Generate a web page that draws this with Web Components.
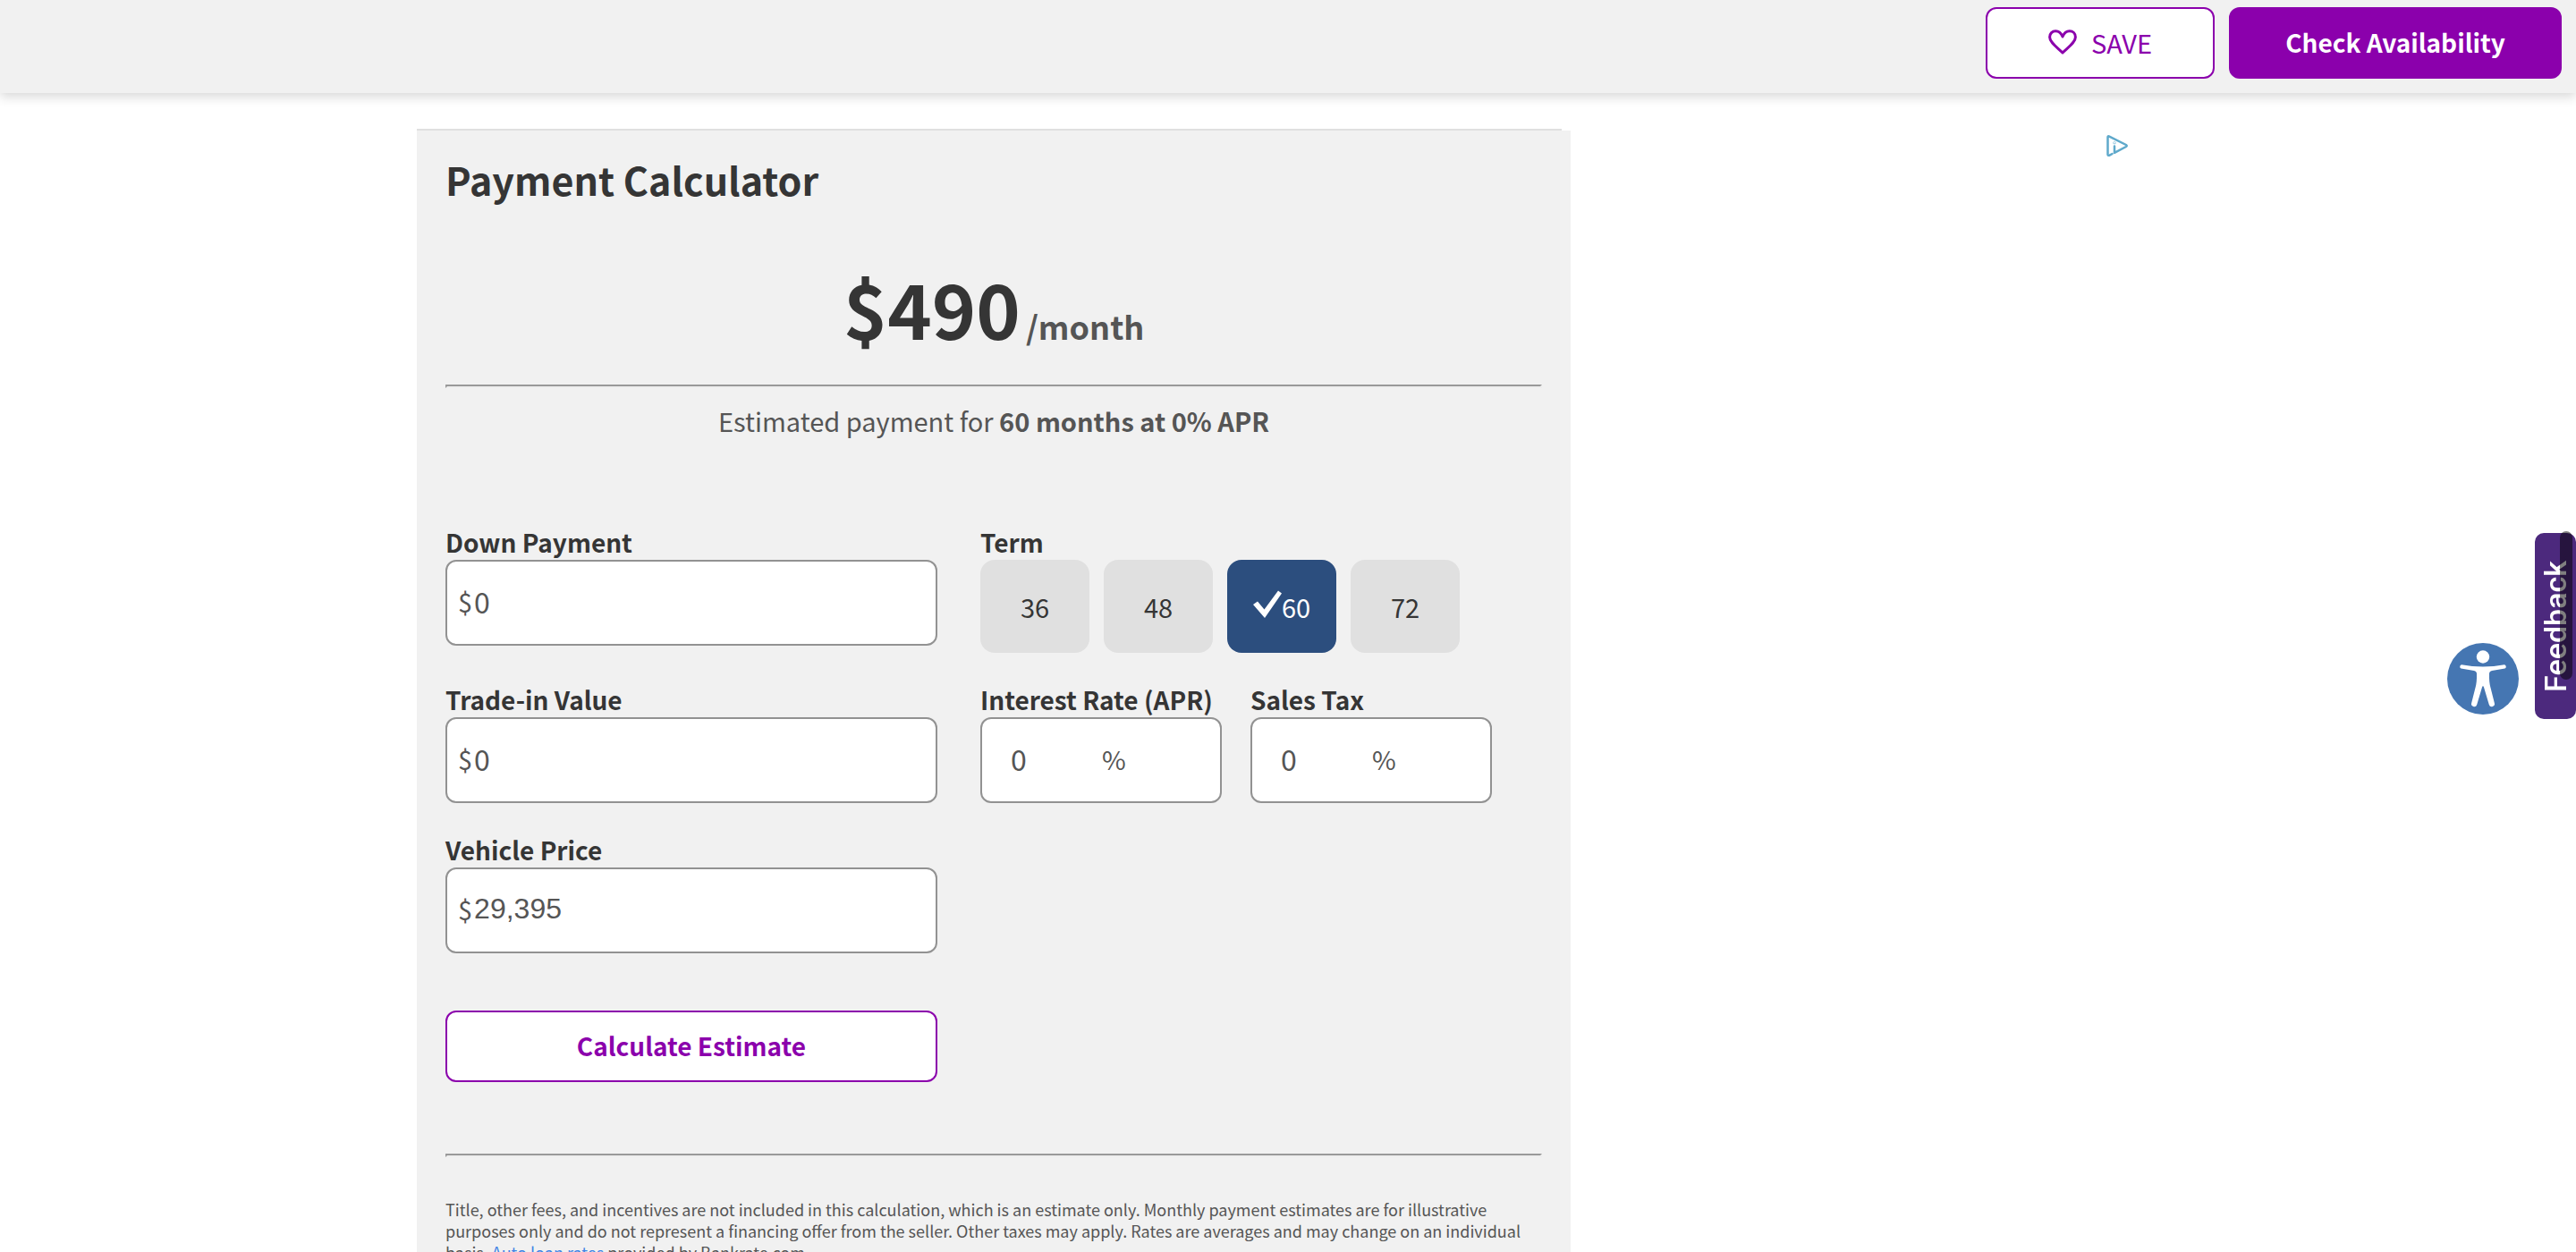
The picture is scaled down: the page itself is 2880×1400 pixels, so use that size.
<!DOCTYPE html>
<html lang="en">
<head>
<meta charset="utf-8">
<title>Payment Calculator</title>
<style>
  html { --sans: "Noto Sans CJK SC", "Noto Sans", sans-serif; --purple: #8b00ac; --ink: #353535; --grey: #555; --panel: #f1f1f1; --line: #999; }
  body { margin: 0; background: #fff; font-family: var(--sans); color: var(--ink); overflow: hidden; height: 100vh; }
</style>
</head>
<body>
<payment-page></payment-page>

<script>
const define = (name, html, setup) => {
  const tpl = document.createElement('template');
  tpl.innerHTML = html;
  customElements.define(name, class extends HTMLElement {
    constructor() {
      super();
      this.attachShadow({ mode: 'open' }).append(tpl.content.cloneNode(true));
    }
    connectedCallback() { if (setup) setup(this, this.shadowRoot); }
  });
};

define('action-button', `
<style>
  :host { display: block; }
  button { box-sizing: border-box; width: 100%; height: 80px; margin: 0; padding: 0 32px 2px; border: 2px solid var(--purple); border-radius: 12px;
    background: #fff; color: var(--purple); font: 700 28px/40px var(--sans); display: flex; align-items: center; justify-content: center; gap: 16px; cursor: pointer; }
  :host([variant="solid"]) button { background: var(--purple); color: #fff; }
  :host([variant="light"]) button { font-weight: 400; font-size: 29px; }
</style>
<button type="button"><slot name="icon"></slot><span><slot></slot></span></button>`);

define('top-bar', `
<style>
  :host { display: flex; justify-content: flex-end; gap: 16px; padding: 8px 16px 16px; background: var(--panel); box-shadow: 0 4px 12px rgba(0,0,0,.16); }
  .save { width: 256px; }
  .check { width: 372px; }
  svg { display: block; width: 32px; height: 28px; }
</style>
<action-button class="save" variant="light">
  <svg slot="icon" viewBox="0 0 32 28" fill="none" stroke="currentColor" stroke-width="3" stroke-linejoin="round"><path d="M16 26 C10 20 1.600 14.500 1.600 8.500 C1.600 4.500 4.500 1.800 8.200 1.800 C12 1.800 14.500 4.400 16 8 C17.500 4.400 20 1.800 23.800 1.800 C27.500 1.800 30.400 4.500 30.400 8.500 C30.400 14.500 22 20 16 26 Z"/></svg>
  SAVE
</action-button>
<action-button class="check" variant="solid">Check Availability</action-button>`);

define('money-field', `
<style>
  :host { display: block; }
  label { display: block; font-size: 28px; line-height: 40px; font-weight: 700; }
  .box { box-sizing: border-box; display: flex; align-items: center; gap: 2px; height: 96px; padding: 0 12px 4px; border: 2px solid #929292; border-radius: 12px; background: #fff; color: var(--grey); font-size: 29px; line-height: 40px; }
  input { flex: 1; min-width: 0; border: 0; padding: 0; margin: 0; background: none; outline: none; color: inherit; font: 32px/40px var(--sans); }
  :host([typed]) input { font-family: "Liberation Sans", Arial, sans-serif; }
</style>
<label for="f"></label>
<div class="box"><span>$</span><input id="f" type="text"></div>`, (host, root) => {
  root.querySelector('label').textContent = host.getAttribute('label');
  root.querySelector('input').value = host.getAttribute('value');
});

define('percent-field', `
<style>
  :host { display: block; flex: none; width: 270px; }
  label { display: block; white-space: nowrap; font-size: 28px; line-height: 40px; font-weight: 700; }
  .box { box-sizing: border-box; display: flex; align-items: center; gap: 2px; height: 96px; padding: 0 32px 4px; border: 2px solid #929292; border-radius: 12px; background: #fff; color: var(--grey); font-size: 29px; line-height: 40px; }
  input { width: 100px; border: 0; padding: 0; margin: 0; background: none; outline: none; color: inherit; font: 32px/40px var(--sans); }
</style>
<label for="f"></label>
<div class="box"><input id="f" type="text"><span>%</span></div>`, (host, root) => {
  root.querySelector('label').textContent = host.getAttribute('label');
  root.querySelector('input').value = host.getAttribute('value');
});

define('term-picker', `
<style>
  :host { display: block; }
  fieldset { border: 0; margin: 0; padding: 0; min-width: 0; }
  legend { padding: 0; font-size: 28px; line-height: 40px; font-weight: 700; }
  .row { display: flex; gap: 16px; }
  label { position: relative; display: flex; align-items: center; justify-content: center; width: 122px; height: 104px; border-radius: 16px; background: #e0e0e0; font-size: 29px; line-height: 40px; cursor: pointer; }
  input { position: absolute; inset: 0; margin: 0; opacity: 0; }
  svg { display: none; width: 32px; height: 32px; margin-bottom: 4px; }
  label:has(:checked) { background: #2c4e7e; color: #fff; }
  label:has(:checked) svg { display: block; }
</style>
<fieldset><legend>Term</legend><div class="row"></div></fieldset>`, (host, root) => {
  root.querySelector('.row').innerHTML = [36, 48, 60, 72].map(n => `<label><input type="radio" name="term" value="${n}"${n === 60 ? ' checked' : ''}><svg viewBox="0 0 32 32"><path d="M0 16 L5 12.500 L12.500 21.500 L28 .5 L32 3.500 L13 31 Z" fill="currentColor"/></svg><span>${n}</span></label>`).join('');
});

define('payment-calculator', `
<style>
  :host { display: block; }
  .rule { height: 2px; margin-right: 10px; background: #e0e0e0; }
  .card { padding: 22px 32px 32px; background: var(--panel); }
  h2 { margin: 0; font-size: 43px; line-height: 64px; font-weight: 700; }
  .total { display: flex; justify-content: center; align-items: baseline; gap: 6px; margin-top: 48px; }
  .total strong { font-size: 84px; line-height: 128px; font-weight: 700; }
  .total span { font-size: 36px; line-height: 40px; font-weight: 700; color: var(--grey); }
  hr { margin: 22px 0 0; border: 2px solid; border-color: var(--line) #eee #eee var(--line); }
  .est { margin: 16px 0 0; text-align: center; font-size: 29px; line-height: 40px; color: var(--grey); }
  form { display: grid; grid-template-columns: 550px 1fr; column-gap: 48px; row-gap: 32px; margin-top: 96px; }
  .pair { display: flex; gap: 32px; }
  .go { grid-column: 1; margin-top: 32px; }
  .end { margin-top: 80px; }
  .note { margin: 46px 0 0; font-size: 18px; line-height: 24px; color: var(--grey); }
  a { color: #3f84e5; text-decoration: none; }
</style>
<div class="rule"></div>
<section class="card">
  <h2>Payment Calculator</h2>
  <div class="total"><strong>$490</strong><span>/month</span></div>
  <hr>
  <p class="est">Estimated payment for <b>60 months at 0% APR</b></p>
  <form>
    <money-field label="Down Payment" value="0"></money-field>
    <term-picker></term-picker>
    <money-field label="Trade-in Value" value="0"></money-field>
    <div class="pair"><percent-field label="Interest Rate (APR)" value="0"></percent-field><percent-field label="Sales Tax" value="0"></percent-field></div>
    <money-field label="Vehicle Price" value="29,395" typed></money-field>
    <action-button class="go">Calculate Estimate</action-button>
  </form>
  <hr class="end">
  <p class="note">Title, other fees, and incentives are not included in this calculation, which is an estimate only. Monthly payment estimates are for illustrative purposes only and do not represent a financing offer from the seller. Other taxes may apply. Rates are averages and may change on an individual basis. <a href="#">Auto loan rates</a> provided by Bankrate.com.</p>
</section>`);

define('ad-slot', `
<style>
  :host { display: block; }
  a, svg { display: block; }
  a { width: 24px; }
  svg { width: 24px; height: 24px; }
</style>
<a href="#" aria-label="AdChoices"><svg viewBox="0 0 24 24" fill="none" stroke="#5fa9cb" stroke-width="2.500" stroke-linejoin="round" stroke-linecap="round"><path d="M6.500 21 L3.500 22.600 Q1.500 23.500 1.500 21.500 V2.500 Q1.500 .7 3.300 1.600 L22 11 Q23.500 12 22 13 L9 19.800 V12.500"/><circle cx="9" cy="8.800" r=".3"/></svg></a>`);

define('access-button', `
<style>
  :host { position: fixed; right: 64px; top: 719px; z-index: 2; }
  button { display: block; padding: 0; border: 0; background: none; cursor: pointer; }
  svg { display: block; width: 80px; height: 80px; }
</style>
<button type="button" aria-label="Accessibility options"><svg viewBox="0 0 80 80"><circle cx="40" cy="40" r="40" fill="#4576b2"/><g fill="#fff"><circle cx="40" cy="15.500" r="7.200"/><path d="M16 24.300 Q28 26.500 40 26.500 Q52 26.500 64 24.300 A2.300 2.300 0 0 1 64.500 28.600 L50 31 Q47 31.600 47 34.500 Q46.700 44 48.500 50 L52.800 67 A3.100 3.100 0 0 1 46.800 69 L41 49.500 Q40 46.500 39 49.500 L33.200 69 A3.100 3.100 0 0 1 27.200 67 L31.500 50 Q33.300 44 33 34.500 Q33 31.600 30 31 L15.500 28.600 A2.300 2.300 0 0 1 16 24.300 Z"/></g></svg></button>`);

define('feedback-tab', `
<style>
  :host { position: fixed; right: 0; top: 596px; z-index: 2; }
  button { display: flex; align-items: center; justify-content: center; width: 46px; height: 208px; padding: 0; border: 0; border-radius: 10px; background: #4c297d; color: #fff; cursor: pointer; font: 500 34px/46px Roboto, sans-serif; }
  span { writing-mode: vertical-rl; rotate: 180deg; }
  i { position: absolute; right: 4px; top: -2px; width: 14px; height: 166px; border-radius: 7px; background: rgba(0,0,0,.5); pointer-events: none; }
</style>
<button type="button"><span>Feedback</span></button><i></i>`);

define('payment-page', `
<style>
  :host { display: block; }
  main { display: grid; grid-template-columns: 1290px 1fr; column-gap: 599px; padding: 40px 0 0 466px; align-items: start; }
  ad-slot { margin-top: 7px; }
</style>
<top-bar></top-bar>
<main><payment-calculator></payment-calculator><ad-slot></ad-slot></main>
<access-button></access-button>
<feedback-tab></feedback-tab>`);
</script>
</body>
</html>
